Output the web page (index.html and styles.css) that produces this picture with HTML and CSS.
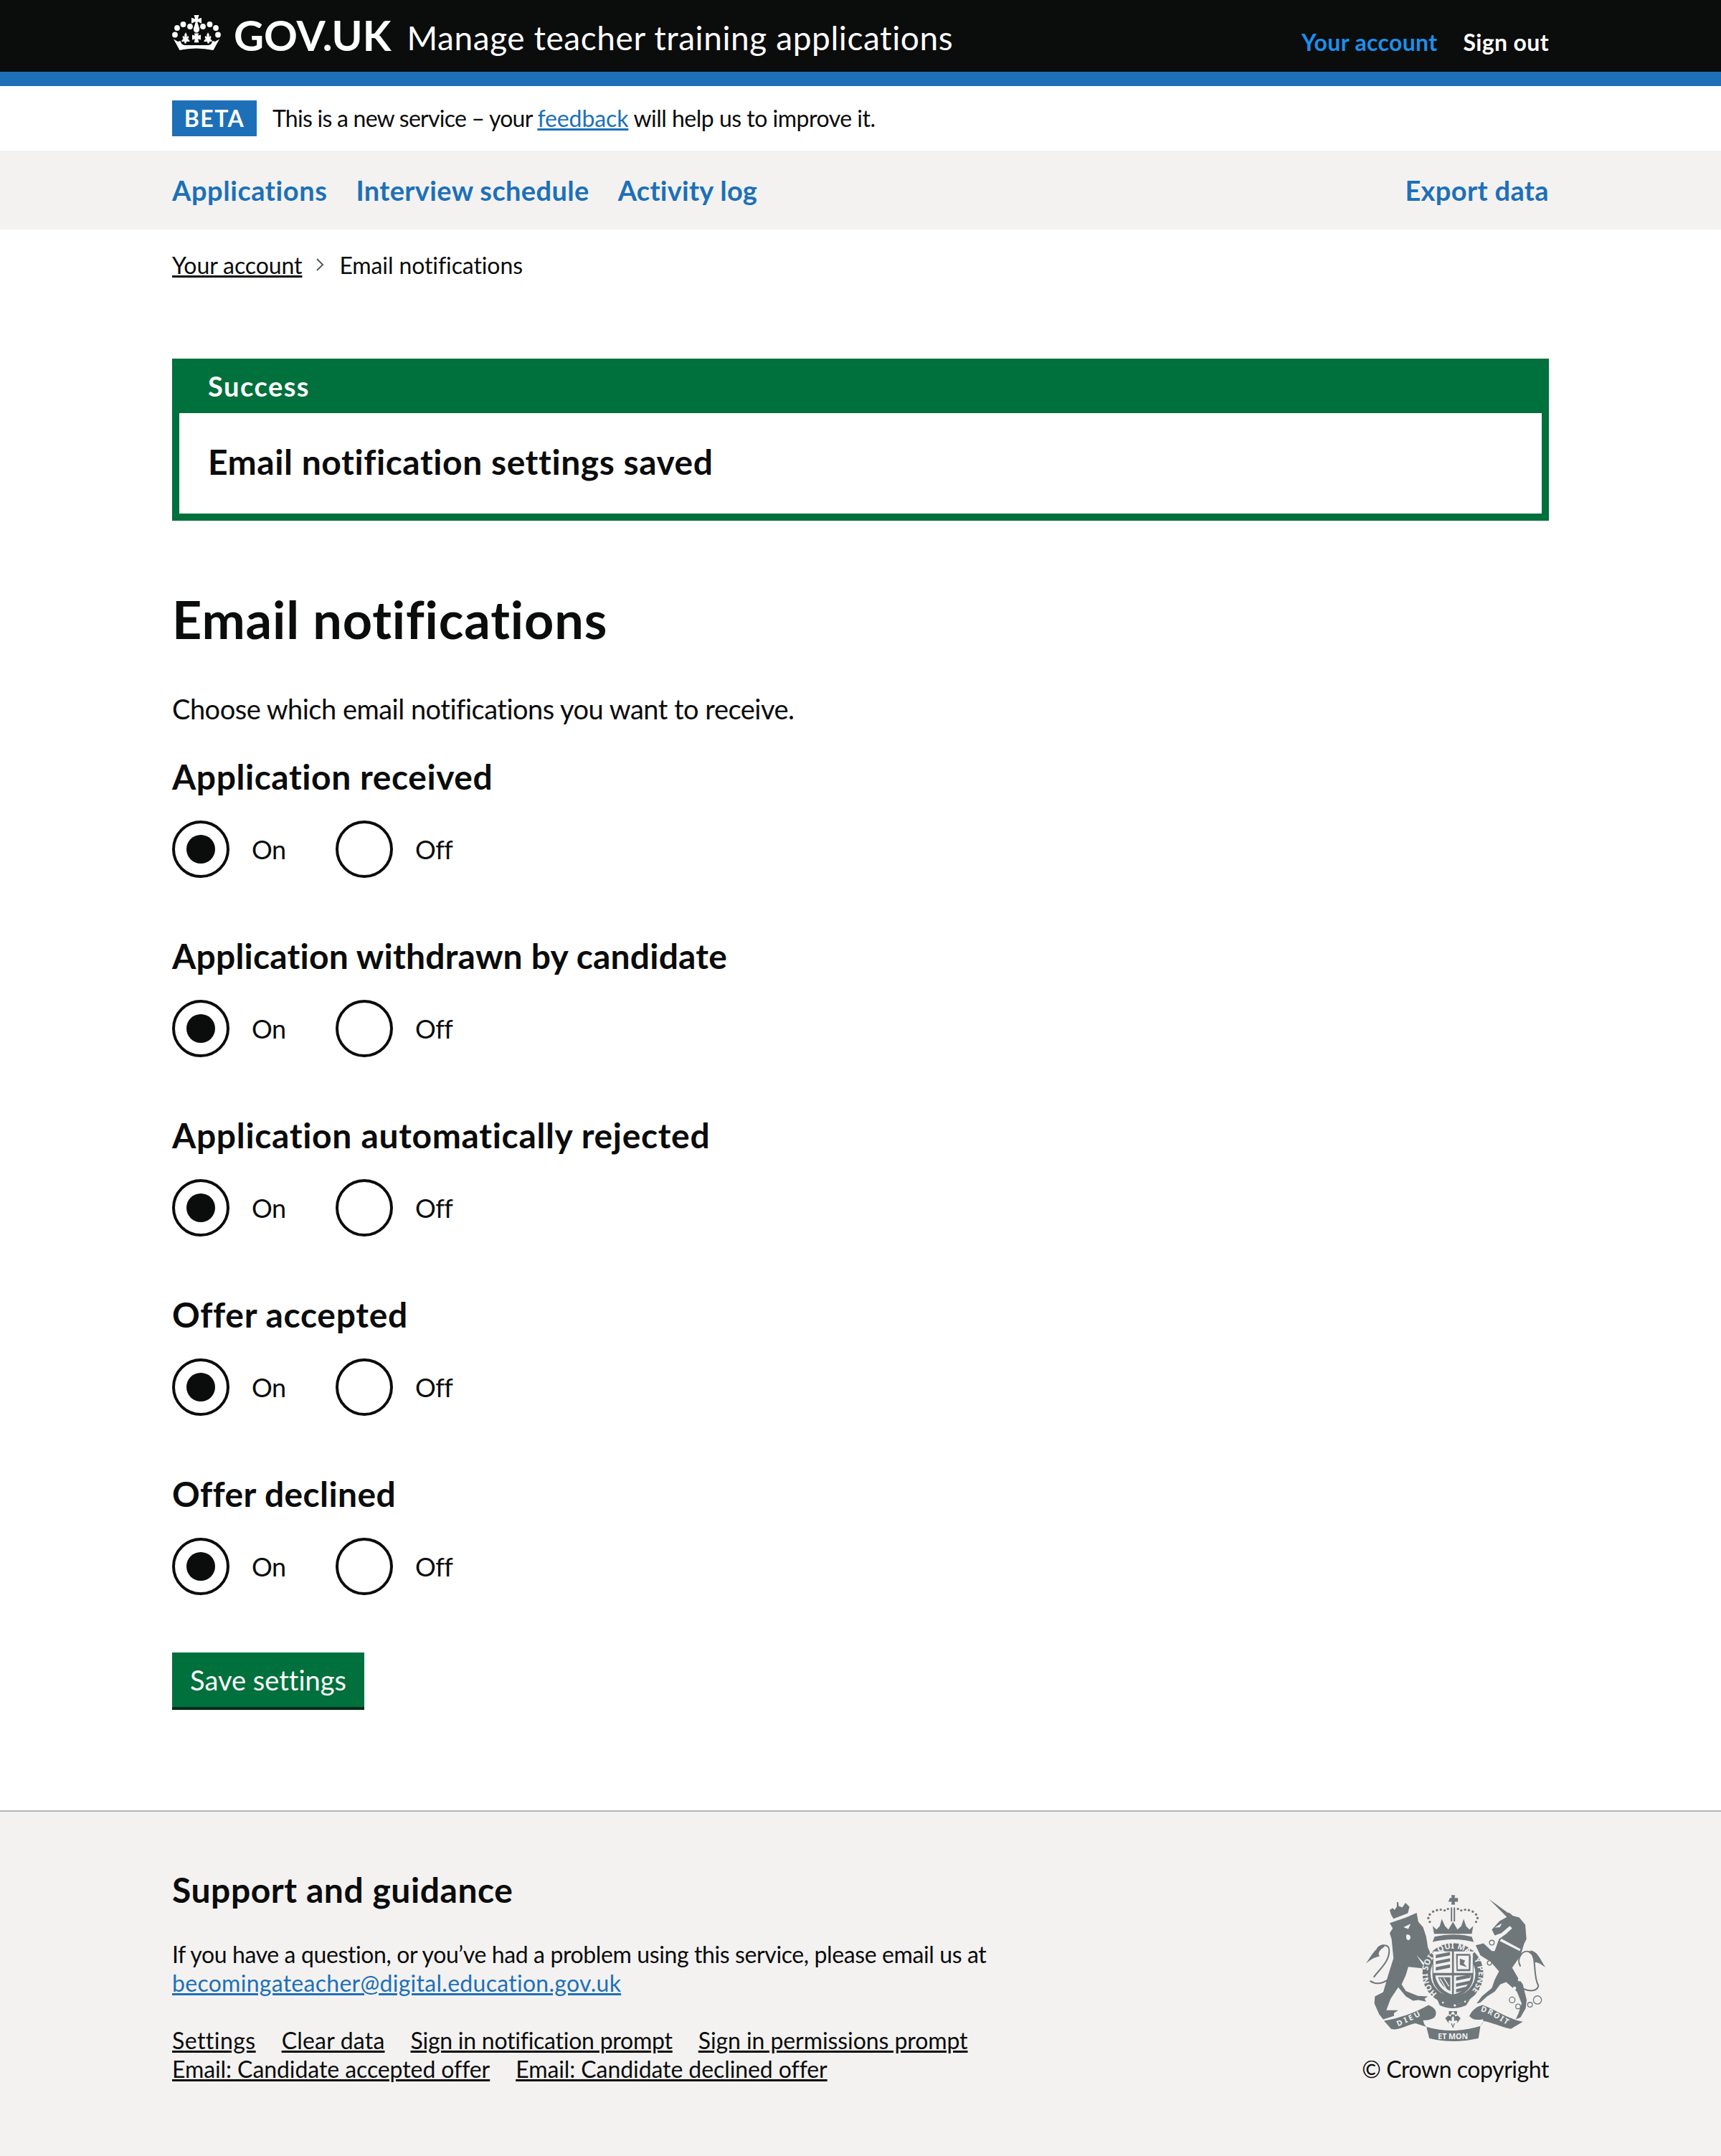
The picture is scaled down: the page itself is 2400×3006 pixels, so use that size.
FILE: index.html
```html
<!DOCTYPE html>
<html lang="en">
<head>
<meta charset="utf-8">
<title>Email notifications - Manage teacher training applications</title>
<link rel="stylesheet" href="styles.css">
</head>
<body>
<header class="header">
  <div class="wrap header-row">
    <a class="logo" href="#">
      <svg class="crown" viewBox="6 0 68 64" aria-hidden="true">
        <g fill="#fff">
          <circle cx="10" cy="32.500" r="3.900"/><circle cx="13" cy="23" r="3.900"/><circle cx="21.500" cy="18" r="3.900"/><circle cx="31" cy="21" r="3.900"/>
          <circle cx="70" cy="32.500" r="3.900"/><circle cx="67" cy="23" r="3.900"/><circle cx="58.500" cy="18" r="3.900"/><circle cx="49" cy="21" r="3.900"/>
          <path d="M36.500 5h7l-1.600 5.400 5.100-1.600v8l-5.100-2.600-.6.700 2.700 8.600c.8 3.400-1.700 6-4 6s-4.800-2.600-4-6l2.700-8.600-.6-.7-5.100 2.600v-8l5.100 1.600z"/>
          <path d="M36.800 30.500h6.400l-1 3.200 3.800-1.100v6.800l-3.800-1.100 1 5h-6.400l1-5-3.800 1.100v-6.800l3.800 1.100z"/>
          <path d="M24.500 29c2.200 2.400 2.800 4 1.500 6.500l2.500-1.500c1.200 1.500.8 3.300-.5 4.500 1.400.8 2.300 1.500 2.800 3.500h-4.800l-.5 2.500h-2l-.5-2.500h-3.800c.2-1.800 1-3 2.600-3.500-1.300-1.200-1.700-3-.5-4.500l2.500 1.500c-1.300-2.500-.5-4.100 1.700-6.500z"/>
          <path d="M55.500 29c2.200 2.400 3 4 1.700 6.500l2.500-1.500c1.200 1.500.8 3.300-.5 4.500 1.600.5 2.400 1.700 2.600 3.500H58l-.5 2.500h-2l-.5-2.500h-4.800c.5-2 1.400-2.700 2.800-3.500-1.300-1.200-1.700-3-.5-4.500l2.500 1.500c-1.300-2.500-.7-4.100 1.500-6.500z"/>
          <path d="M8 38.500l6 3.500 3.500-1 2 4.500 3.500 1.500h34l3.500-1.500 2-4.500 3.500 1 6-3.500-8.500 15.500Q40 49 16.500 54z"/>
        </g>
      </svg>
      <span class="logo-text">GOV.UK</span>
    </a>
    <a class="service" href="#">Manage teacher training applications</a>
    <nav class="account">
      <a class="account-link current" href="#">Your account</a>
      <a class="account-link signout" href="#">Sign out</a>
    </nav>
  </div>
</header>

<div class="wrap phase">
  <strong class="tag">BETA</strong>
  <span class="phase-text"><span class="phase-lead">This is a new service – your </span><a href="#" class="link">feedback</a> will help us to improve it.</span>
</div>

<nav class="subnav">
  <div class="wrap subnav-row">
    <a href="#" class="nav-link nav-a">Applications</a>
    <a href="#" class="nav-link nav-b">Interview schedule</a>
    <a href="#" class="nav-link nav-c">Activity log</a>
    <a href="#" class="nav-link nav-d">Export data</a>
  </div>
</nav>

<main class="wrap">
  <div class="crumbs">
    <a href="#" class="crumb-link">Your account</a>
    <svg class="chevron" viewBox="0 0 14 20" aria-hidden="true"><path d="M2 2l8 8-8 8" fill="none" stroke="#505a5f" stroke-width="2"/></svg>
    <span class="crumb-current">Email notifications</span>
  </div>

  <div class="banner">
    <div class="banner-title">Success</div>
    <div class="banner-body">Email notification settings saved</div>
  </div>

  <h1 class="title">Email notifications</h1>
  <p class="intro">Choose which email notifications you want to receive.</p>

  <section class="group">
    <h2 class="legend received">Application received</h2>
    <div class="radios">
      <div class="radio"><span class="mark on"></span><span class="radio-label">On</span></div>
      <div class="radio"><span class="mark"></span><span class="radio-label">Off</span></div>
    </div>
  </section>
  <section class="group">
    <h2 class="legend withdrawn">Application withdrawn by candidate</h2>
    <div class="radios">
      <div class="radio"><span class="mark on"></span><span class="radio-label">On</span></div>
      <div class="radio"><span class="mark"></span><span class="radio-label">Off</span></div>
    </div>
  </section>
  <section class="group">
    <h2 class="legend rejected">Application automatically rejected</h2>
    <div class="radios">
      <div class="radio"><span class="mark on"></span><span class="radio-label">On</span></div>
      <div class="radio"><span class="mark"></span><span class="radio-label">Off</span></div>
    </div>
  </section>
  <section class="group">
    <h2 class="legend accepted">Offer accepted</h2>
    <div class="radios">
      <div class="radio"><span class="mark on"></span><span class="radio-label">On</span></div>
      <div class="radio"><span class="mark"></span><span class="radio-label">Off</span></div>
    </div>
  </section>
  <section class="group last">
    <h2 class="legend">Offer declined</h2>
    <div class="radios">
      <div class="radio"><span class="mark on"></span><span class="radio-label">On</span></div>
      <div class="radio"><span class="mark"></span><span class="radio-label">Off</span></div>
    </div>
  </section>
  <button class="button" type="button">Save settings</button>
</main>

<footer class="footer">
  <div class="wrap footer-row">
    <div class="footer-main">
      <h2 class="footer-title">Support and guidance</h2>
      <p class="footer-text">If you have a question, or you’ve had a problem using this service, please email us at<br><a href="#" class="link email">becomingateacher@digital.education.gov.uk</a></p>
      <ul class="footer-links">
        <li><a href="#">Settings</a></li>
        <li><a href="#">Clear data</a></li>
        <li><a href="#">Sign in notification prompt</a></li>
        <li><a href="#">Sign in permissions prompt</a></li>
        <li><a href="#">Email: Candidate accepted offer</a></li>
        <li><a href="#">Email: Candidate declined offer</a></li>
      </ul>
    </div>
    <div class="footer-side">
      <svg class="crest" viewBox="130 60 760 620" aria-label="Royal coat of arms">
        <g fill="#6f777b">
          <path d="M232 183L300 160 345 140 352 178 372 200 385 240 392 285 410 325 378 352 345 318 395 395 410 412 385 420 368 372 310 366 300 400 282 440 300 468 350 488 392 490 378 500 385 512 352 505 330 508 300 490 268 452 236 500 218 548 268 548 250 560 250 572 205 586 188 565 168 520 170 490 205 472 226 400 248 330 240 250 232 225 245 205z"/>
          <path d="M225 420C190 445 165 435 150 425M165 410C190 375 232 345 230 295 228 270 195 272 180 290" fill="none" stroke="#6f777b" stroke-width="6"/>
          <path d="M205 272C175 285 160 310 133 352 160 330 175 325 190 322 180 310 190 295 210 282z"/>
          <path d="M238 148L232 128 245 120 252 128 262 115 262 95 268 95 270 112 285 118 298 98 315 115 308 142 248 165z"/>
          <path d="M484 78h8l-2-12h16l-2 12h14v16h-14l2 12h-16l2-12h-14z"/>
          <path d="M488 118h6v58h-6zM500 118h6v58h-6z"/>
          <path d="M418 228L412 195 428 210 442 196 450 166 464 196 478 210 497 178 516 210 532 196 542 166 552 196 566 210 582 195 576 228z"/>
          <path d="M420 240Q497 222 576 240L584 262Q497 240 412 262z"/>
          <circle cx="497" cy="395" r="128"/>
          <path d="M648 82L738 148 730 165z"/>
          <path d="M660 210L692 175 722 158 730 138 748 152 775 160 800 190 805 250 795 270 780 320 745 370 768 410 790 440 806 505 802 540 780 578 760 586 772 560 785 520 765 470 720 430 695 440 672 470 640 490 612 516 596 520 618 490 660 455 672 420 690 385 655 345 612 318 592 276 625 268 660 300 672 300 690 250 720 228 745 205 735 195 700 225 672 235z"/>
          <path d="M780 365C760 330 790 290 820 305 850 325 830 400 855 445 850 470 820 470 790 458" fill="none" stroke="#6f777b" stroke-width="6"/>
          <path d="M822 298C850 300 860 330 884 368 860 350 848 345 838 348 842 330 830 315 815 308z"/>
        </g>
        <g fill="#f3f2f1">
          <circle cx="497" cy="395" r="94"/>
          <circle cx="785" cy="375" r="10"/><circle cx="776" cy="420" r="7"/><circle cx="755" cy="456" r="7"/><circle cx="660" cy="265" r="10"/><circle cx="650" cy="350" r="9"/>
          <path d="M700 248l80 44-3 8-84-42z"/>
          <path d="M672 202l30-18-8 16z"/>
          <path d="M290 200l30-14-10 22zM302 232c14-4 22 8 14 20-8 6-18 0-14-20z"/>
        </g>
        <g fill="none" stroke="#6f777b" stroke-width="4">
          <circle cx="660" cy="265" r="10"/><circle cx="650" cy="350" r="9"/>
          <circle cx="745" cy="505" r="12"/><circle cx="770" cy="532" r="10"/><circle cx="820" cy="525" r="10"/><circle cx="851" cy="505" r="17"/>
        </g>
        <g fill="#6f777b">
          <circle cx="400" cy="178" r="5"/><circle cx="394" cy="162" r="5"/><circle cx="400" cy="147" r="5"/><circle cx="414" cy="135" r="5"/><circle cx="430" cy="129" r="5"/><circle cx="446" cy="127" r="5"/><circle cx="462" cy="130" r="5"/><circle cx="476" cy="124" r="5"/>
          <circle cx="594" cy="178" r="5"/><circle cx="600" cy="162" r="5"/><circle cx="594" cy="147" r="5"/><circle cx="580" cy="135" r="5"/><circle cx="564" cy="129" r="5"/><circle cx="548" cy="127" r="5"/><circle cx="532" cy="130" r="5"/><circle cx="518" cy="124" r="5"/>
          <path d="M411 298H583V402Q583 470 497 498 411 470 411 402z"/>
        </g>
        <g fill="#f3f2f1">
          <path d="M415 302H493V392H415zM501 302H580V392H501z"/>
          <path d="M424 402H493V482Q440 466 424 410zM501 402H572V412Q556 466 501 482z"/>
        </g>
        <g fill="#6f777b">
          <path d="M425 316l60-12 0 14-60 12zM425 342l60-12 0 14-60 12zM425 368l60-12 0 14-60 12z"/>
          <path d="M510 312h62l-2 72h-58zM517 320v56h46l1-56z"/>
          <path d="M526 332l22 8-6 12 14 16-30-10z"/>
          <path d="M434 410h52v58q-36-14-52-58z"/>
          <path d="M510 410l60-12v14l-60 12zM510 436l58-12v14l-58 12zM510 460l46-12v14l-46 12z"/>
        </g>
        <path d="M442 414l30 50M458 412l22 36M434 424l24 36" fill="none" stroke="#f3f2f1" stroke-width="4"/>
        <path id="ringText" d="M431 478A106 106 0 1 1 566 476" fill="none"/>
        <text class="crest-text ring"><textPath href="#ringText" textLength="505" lengthAdjust="spacing">HONI SOIT QUI MAL Y PENSE</textPath></text>
        <g fill="#6f777b">
          <path d="M430 500Q497 545 570 500L552 528Q497 552 442 528z"/>
          <path d="M208 592C270 582 340 558 395 526Q440 545 420 578 400 592 372 590 374 606 386 618L340 603C300 612 262 636 238 626z"/>
          <path d="M386 618Q497 650 612 614L604 666Q497 690 398 666z"/>
          <path d="M612 614C624 600 628 592 622 586 600 590 580 590 566 572 576 548 596 532 622 526 680 548 732 586 790 596L740 626C700 620 655 596 625 594z"/>
          <path d="M497 552l-8 10 0 12-12-4-12 12 12 18 12 4 8 20 8-20 12-4 12-18-12-12-12 4 0-12zM480 552h34v14h-34z"/>
        </g>
        <path d="M497 572l-5 8 0 14-9-4-6 6 8 9 8-2 4 12 4-12 8 2 8-9-6-6-9 4 0-14z" fill="#f3f2f1"/>
        <circle cx="455" cy="516" r="4" fill="#f3f2f1"/><circle cx="505" cy="528" r="5" fill="#f3f2f1"/><circle cx="548" cy="512" r="4" fill="#f3f2f1"/>
        <path id="dieuText" d="M268 616C300 600 340 585 375 562" fill="none"/>
        <path id="droitText" d="M612 552C650 560 690 590 728 612" fill="none"/>
        <text class="crest-text"><textPath href="#dieuText" textLength="105" lengthAdjust="spacing">DIEU</textPath></text>
        <text class="crest-text"><textPath href="#droitText" textLength="125" lengthAdjust="spacing">DROIT</textPath></text>
        <text class="crest-text" x="497" y="668" text-anchor="middle">ET MON</text>
      </svg>
      <p class="copyright">© Crown copyright</p>
    </div>
  </div>
</footer>
</body>
</html>
```

FILE: styles.css
```css
* { box-sizing: border-box; }
html, body { margin: 0; padding: 0; }
body {
  font-family: Lato, "Liberation Sans", sans-serif;
  font-variant-ligatures: none;
  color: #0b0c0c;
  background: #fff;
  font-size: 38px;
}
a { color: inherit; }
.wrap { width: 1920px; margin: 0 auto; }

.header { background: #0b0c0c; border-bottom: 20px solid #1d70b8; height: 120px; }
.header-row { display: flex; align-items: center; height: 100px; }
.logo { display: flex; align-items: center; color: #fff; text-decoration: none; }
.crown { width: 68px; height: 64px; margin-top: -4px; flex: none; }
.logo-text { font-size: 58px; font-weight: 700; line-height: 100px; margin-left: 18px; margin-top: -2px; }
.service { color: #fff; text-decoration: none; font-size: 46px; letter-spacing: 0.58px; margin-left: 22px; line-height: 100px; margin-top: 6px; }
.account { margin-left: auto; display: flex; gap: 36px; }
.account-link { font-size: 32px; font-weight: 700; letter-spacing: 0.35px; text-decoration: none; line-height: 100px; margin-top: 18px; height: 100px; }
.account-link.current { color: #1d8feb; }
.account-link.signout { color: #fff; }

.phase { height: 90px; display: flex; align-items: center; }
.tag { background: #1d70b8; color: #fff; font-size: 32px; font-weight: 700; width: 118px; height: 50px; line-height: 50px; text-align: center; letter-spacing: 1.5px; margin-right: 22px; }
.phase-text { font-size: 32px; letter-spacing: -0.5px; margin-top: -2px; }
.phase-lead { letter-spacing: -0.75px; }
.link { color: #1d70b8; }
.phase-text .link { letter-spacing: -0.1px; }

.subnav { background: #f3f2f1; height: 110px; }
.subnav-row { display: flex; align-items: center; height: 110px; gap: 40px; }
.nav-link { font-size: 38px; font-weight: 700; letter-spacing: 0.36px; color: #1d70b8; text-decoration: none; }
.nav-a { letter-spacing: 0.56px; }
.nav-c { letter-spacing: 0.26px; }
.nav-d { margin-left: auto; }

.crumbs { display: flex; align-items: center; height: 40px; margin-top: 29px; font-size: 32px; letter-spacing: -0.1px; }
.crumb-link { color: #0b0c0c; }
.chevron { width: 14px; height: 20px; margin: 0 19px; flex: none; }

.banner { margin-top: 111px; border: 10px solid #00703c; background: #00703c; height: 226px; }
.banner-title { height: 66px; line-height: 56px; color: #fff; font-size: 38px; font-weight: 700; letter-spacing: 1.5px; padding-left: 40px; }
.banner-body { background: #fff; height: 140px; line-height: 136px; padding-left: 40px; font-size: 48px; font-weight: 700; letter-spacing: 0.55px; }

.title { margin: 87px 0 0; font-size: 72px; line-height: 100px; font-weight: 700; letter-spacing: 0.85px; }
.intro { margin: 50px 0 0; padding-bottom: 1px; font-size: 38px; line-height: 50px; letter-spacing: -0.5px; }

.group { margin-top: 39px; height: 211px; }
.group.last { height: 251px; }
.legend { margin: 0; font-size: 48px; line-height: 60px; font-weight: 700; letter-spacing: 0.4px; }
.received { letter-spacing: 0.55px; }
.withdrawn { letter-spacing: 0.2px; }
.rejected { letter-spacing: 0.66px; }
.accepted { letter-spacing: 0.68px; }
.radios { display: flex; margin-top: 31px; }
.radio { display: flex; align-items: center; height: 80px; width: 228px; }
.mark { width: 80px; height: 80px; border: 4px solid #0b0c0c; border-radius: 50%; display: flex; align-items: center; justify-content: center; flex: none; }
.mark.on::after { content: ""; width: 40px; height: 40px; border-radius: 50%; background: #0b0c0c; }
.radio-label { margin-left: 31px; font-size: 36px; line-height: 50px; letter-spacing: -0.5px; }

.button { display: block; margin: 0; border: 0; width: 268px; height: 80px; padding: 0 0 4px; background: #00703c; box-shadow: inset 0 -4px 0 #002d18; color: #fff; font: 38px Lato, sans-serif; font-variant-ligatures: none; }

.footer { margin-top: 140px; background: #f3f2f1; border-top: 2px solid #b1b4b6; height: 482px; }
.footer-row { display: flex; justify-content: space-between; }
.footer-title { margin: 79px 0 0; font-size: 48px; line-height: 60px; font-weight: 700; letter-spacing: 0.55px; }
.footer-text { margin: 40px 0 0; font-size: 32px; line-height: 40px; letter-spacing: -0.39px; }
.email { letter-spacing: 0.28px; }
.footer-links { list-style: none; margin: 40px 0 0; padding: 0; display: flex; flex-wrap: wrap; width: 1200px; column-gap: 36px; font-size: 32px; line-height: 40px; letter-spacing: -0.08px; }
.footer-links li:nth-child(1) { letter-spacing: 0.45px; }
.footer-links li:nth-child(2) { letter-spacing: 0.2px; }
.footer-links li:nth-child(3) { letter-spacing: -0.25px; }
.footer-side { display: flex; flex-direction: column; align-items: flex-end; padding-top: 114px; }
.crest { width: 253px; height: 207px; display: block; margin-right: 3px; }
.crest-text { font: 700 32px "Noto Sans", sans-serif; fill: #f3f2f1; }
.crest-text.ring { font-size: 34px; }
.copyright { margin: 18px 0 0; font-size: 32px; line-height: 40px; letter-spacing: -0.45px; }
```
